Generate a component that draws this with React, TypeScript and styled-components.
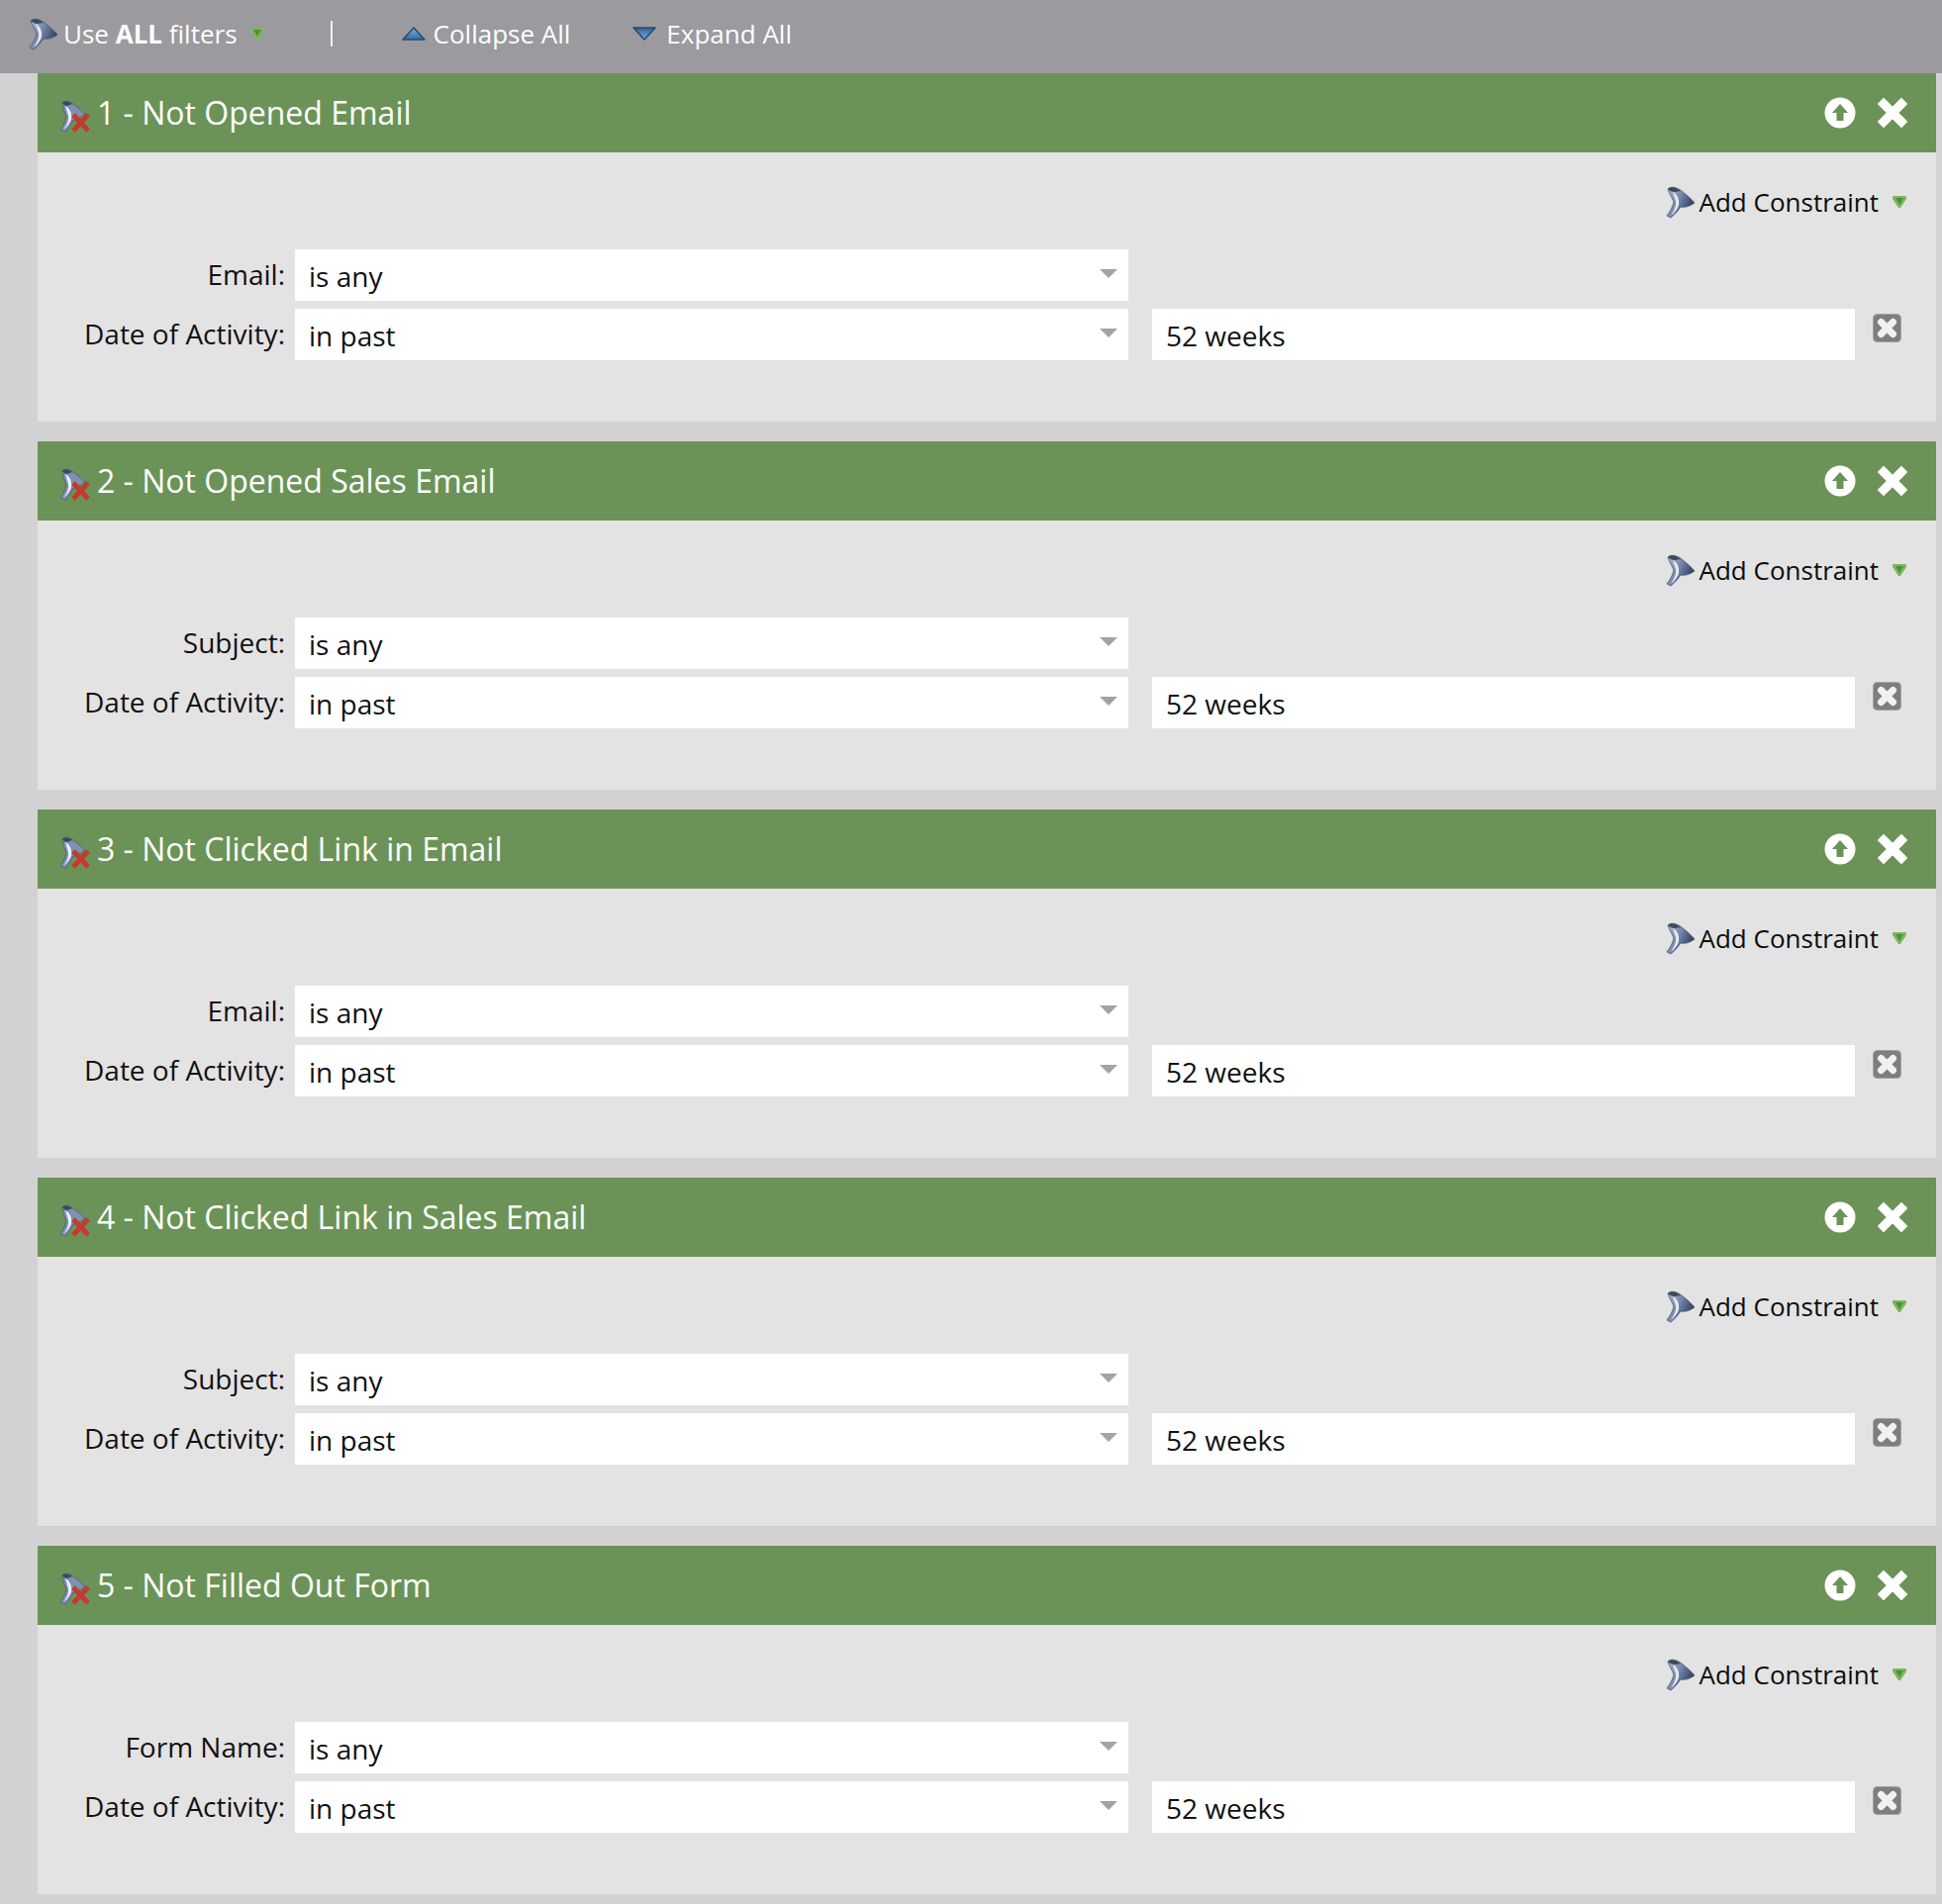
import { useId } from "react";
import styled, { createGlobalStyle } from "styled-components";

const GlobalStyle = createGlobalStyle`
  html, body {
    margin: 0;
    padding: 0;
    background: #d3d2d2;
    font-family: "Open Sans", "Liberation Sans", sans-serif;
  }
`;

const Page = styled.div`
  width: 1962px;
  height: 1924px;
  overflow: hidden;
  background: #d3d2d2;
`;

const Toolbar = styled.div`
  display: flex;
  align-items: center;
  box-sizing: border-box;
  height: 74px;
  padding: 0 0 6px 29px;
  background: #9b9a9f;
  color: #fff;
  font-size: 26px;
`;

const ToolItem = styled.div<{ $gap?: number; $left?: number }>`
  display: flex;
  align-items: center;
  gap: ${(p) => p.$gap ?? 5}px;
  margin-left: ${(p) => p.$left ?? 0}px;
  b {
    font-weight: 700;
  }
`;

const Pipe = styled.div`
  width: 2px;
  height: 26px;
  margin-left: 67px;
  background: #f1f1f1;
`;

const CardList = styled.div`
  display: flex;
  flex-direction: column;
  gap: 20px;
  margin: 0 6px 0 38px;
`;

const Card = styled.section`
  display: flex;
  flex-direction: column;
  height: 352px;
  background: #e3e3e3;
`;

const CardHeader = styled.header`
  display: flex;
  align-items: center;
  height: 80px;
  padding: 0 29px 0 22px;
  background: #6b9357;
  color: #fff;
`;

const CardTitle = styled.h2`
  flex: 1;
  margin: 0 0 0 6px;
  font-size: 32px;
  font-weight: 400;
  line-height: 80px;
  white-space: nowrap;
`;

const HeaderActions = styled.div`
  display: flex;
  align-items: center;
  gap: 22px;
`;

const ConstraintBar = styled.div`
  display: flex;
  justify-content: flex-end;
  align-items: center;
  box-sizing: border-box;
  height: 98px;
  padding: 2px 30px 0 0;
  color: #0c0c0c;
  font-size: 26px;
`;

const ConstraintLabel = styled.span`
  margin: 0 14px 0 4px;
`;

const Row = styled.div`
  display: flex;
  align-items: flex-start;
  height: 52px;
  margin-bottom: 8px;
`;

const Label = styled.label`
  width: 250px;
  padding-right: 10px;
  text-align: right;
  font-size: 28px;
  line-height: 50px;
  color: #111;
  white-space: nowrap;
`;

const Field = styled.div<{ $width: number; $left?: number }>`
  display: flex;
  align-items: center;
  justify-content: space-between;
  box-sizing: border-box;
  width: ${(p) => p.$width}px;
  height: 52px;
  margin-left: ${(p) => p.$left ?? 0}px;
  padding: 1px 11px 0 14px;
  background: #fff;
  font-size: 28px;
  color: #111;
  white-space: nowrap;
`;

const SelectCaret = styled.span`
  width: 0;
  height: 0;
  margin: -4px 0 0;
  border-left: 9px solid transparent;
  border-right: 9px solid transparent;
  border-top: 9px solid #a3a3a3;
`;

const RemoveButton = styled.button`
  display: flex;
  padding: 0;
  margin: 5px 0 0 18px;
  border: 0;
  background: none;
`;

const RemoveFilterSvg = styled.svg`
  flex: none;
  margin-top: 8px;
`;

function FunnelIcon() {
  const id = useId();
  return (
    <svg width="30" height="34" viewBox="0 0 30 34">
      <defs>
        <linearGradient id={id} x1="0" y1="0" x2="1" y2="0.5">
          <stop offset="0" stopColor="#b9c2d6" />
          <stop offset="0.5" stopColor="#7688ad" />
          <stop offset="1" stopColor="#2e3d60" />
        </linearGradient>
      </defs>
      <path
        d="M2 4C5 1 11 2 16 6C21 10 26 14 29 18C25 21 20 23 15 22C12 26 9 30 5 33L1 31C4 27 7 22 8 17C6 12 3 8 2 4Z"
        fill={`url(#${id})`}
        stroke="#4a5876"
        strokeWidth="0.8"
        strokeLinejoin="round"
      />
      <path d="M7 7C11 9 14 14 13 20C12 24 8 29 5 31C8 26 11 21 10 16C9 13 8 10 7 7Z" fill="#e8ebf2" />
      <path d="M2 4C5 1 10 2 15 6L9 7C6 7 4 6 2 4Z" fill="#3b4966" />
    </svg>
  );
}

function FunnelRemoveIcon() {
  return (
    <RemoveFilterSvg width="32" height="34" viewBox="0 0 32 34">
      <path
        d="M3 3C6 0 10 1 14 4C18 7 23 11 26 14C21 18 17 20 14 20C12 25 9 29 6 32L1 30C4 26 6 22 7 17C5 12 3 7 3 3Z"
        fill="#7f90b0"
        stroke="#4a5876"
        strokeWidth="0.8"
        strokeLinejoin="round"
      />
      <path d="M6 6C10 8 13 13 12 19C11 23 8 27 4 30C7 26 10 21 9 16C8 12 7 9 6 6Z" fill="#f1f3f6" />
      <path d="M3 3C5 1 9 1 13 4L8 6C6 6 4 5 3 3Z" fill="#3b4966" />
      <path d="M14 15L29 31M29 15L14 31" stroke="#c23b30" strokeWidth="5" fill="none" />
    </RemoveFilterSvg>
  );
}

function GreenArrow() {
  return (
    <svg width="14" height="12" viewBox="0 0 14 12">
      <path d="M0 1Q0 0 1 0H13Q14 0 14 1V3L8 12H6L0 3Z" fill="#7fb561" />
      <path d="M3 2H11L7 9Z" fill="#4f9135" />
    </svg>
  );
}

function BlueTriangle({ down }: { down?: boolean }) {
  const id = useId();
  return (
    <svg width="24" height="14" viewBox="0 0 24 14">
      <defs>
        <linearGradient id={id} x1="0" y1="0" x2="0" y2="1">
          <stop offset="0" stopColor={down ? "#2f5f90" : "#79b1e0"} />
          <stop offset="1" stopColor={down ? "#7cb3e2" : "#2f6ba5"} />
        </linearGradient>
      </defs>
      <path
        d={down ? "M1 1H23L12 13Z" : "M12 1L23 13H1Z"}
        fill={`url(#${id})`}
        stroke="#27496d"
        strokeWidth="1.5"
        strokeLinejoin="round"
      />
    </svg>
  );
}

function UpCircleIcon() {
  return (
    <svg width="32" height="32" viewBox="0 0 32 32">
      <circle cx="16" cy="16" r="15.5" fill="#fff" />
      <path d="M16 7L24 16H19.5V24H12.5V16H8Z" fill="#6b9357" />
    </svg>
  );
}

function CloseIcon() {
  return (
    <svg width="30" height="30" viewBox="0 0 30 30">
      <path d="M6 6L24 24M24 6L6 24" stroke="#fff" strokeWidth="9" strokeLinecap="square" />
    </svg>
  );
}

function RemoveIcon() {
  return (
    <svg width="29" height="29" viewBox="0 0 29 29">
      <rect x="0.5" y="0.5" width="28" height="28" rx="4" fill="#7e7e7e" stroke="#a2a2a2" />
      <path d="M8.5 8.5L20.5 20.5M20.5 8.5L8.5 20.5" stroke="#f1f1f1" strokeWidth="7" strokeLinecap="round" />
    </svg>
  );
}

const filters = [
  { title: "1 - Not Opened Email", field: "Email" },
  { title: "2 - Not Opened Sales Email", field: "Subject" },
  { title: "3 - Not Clicked Link in Email", field: "Email" },
  { title: "4 - Not Clicked Link in Sales Email", field: "Subject" },
  { title: "5 - Not Filled Out Form", field: "Form Name" },
];

export default function App() {
  return (
    <Page>
      <GlobalStyle />
      <Toolbar>
        <ToolItem>
          <FunnelIcon />
          <span>
            Use <b>ALL</b> filters
          </span>
        </ToolItem>
        <ToolItem $left={13}>
          <GreenArrow />
        </ToolItem>
        <Pipe />
        <ToolItem $left={70} $gap={8}>
          <BlueTriangle />
          <span>Collapse All</span>
        </ToolItem>
        <ToolItem $left={63} $gap={10}>
          <BlueTriangle down />
          <span>Expand All</span>
        </ToolItem>
      </Toolbar>
      <CardList>
        {filters.map((filter) => (
          <Card key={filter.title}>
            <CardHeader>
              <FunnelRemoveIcon />
              <CardTitle>{filter.title}</CardTitle>
              <HeaderActions>
                <UpCircleIcon />
                <CloseIcon />
              </HeaderActions>
            </CardHeader>
            <ConstraintBar>
              <FunnelIcon />
              <ConstraintLabel>Add Constraint</ConstraintLabel>
              <GreenArrow />
            </ConstraintBar>
            <Row>
              <Label>{filter.field}:</Label>
              <Field $width={842}>
                is any
                <SelectCaret />
              </Field>
            </Row>
            <Row>
              <Label>Date of Activity:</Label>
              <Field $width={842}>
                in past
                <SelectCaret />
              </Field>
              <Field $width={710} $left={24}>
                52 weeks
              </Field>
              <RemoveButton>
                <RemoveIcon />
              </RemoveButton>
            </Row>
          </Card>
        ))}
      </CardList>
    </Page>
  );
}
